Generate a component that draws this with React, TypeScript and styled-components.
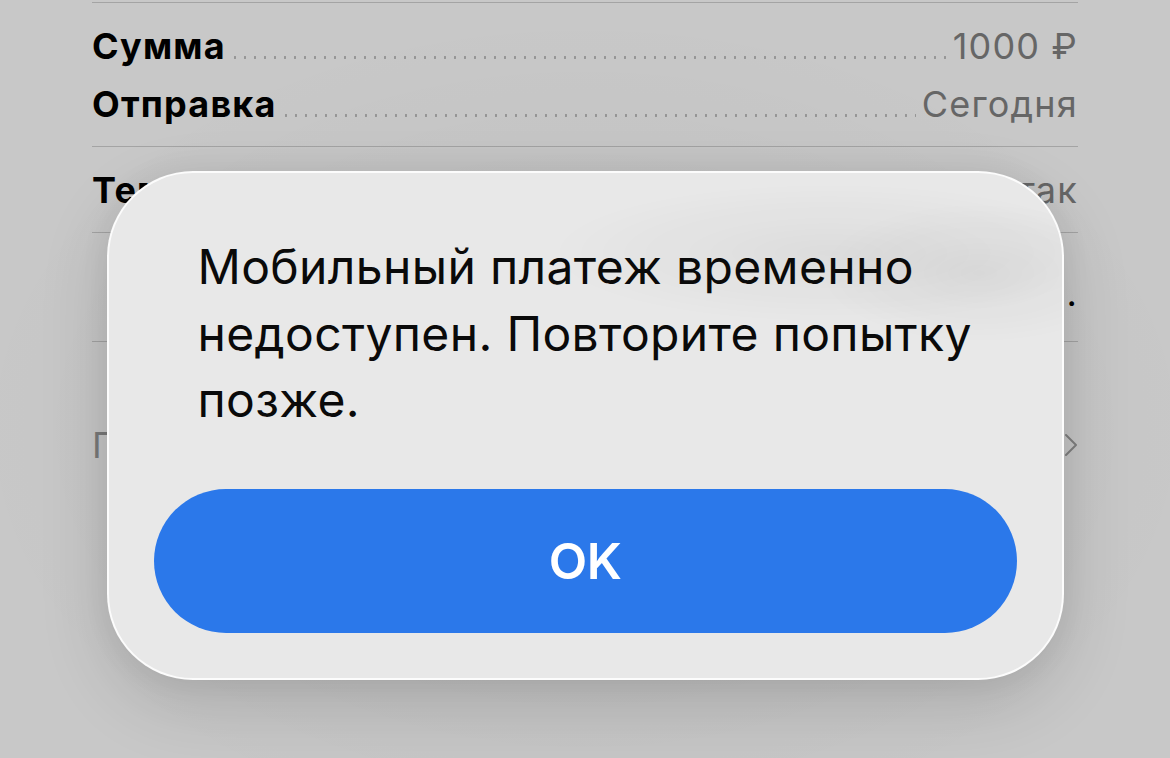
import React from "react";
import styled, { createGlobalStyle } from "styled-components";

const Global = createGlobalStyle`
  html, body {
    margin: 0;
    padding: 0;
    background: #c8c8c8;
  }
  body {
    font-family: Inter, "Noto Sans", "DejaVu Sans", sans-serif;
    -webkit-font-smoothing: antialiased;
  }
`;

const Page = styled.div`
  position: relative;
  width: 1170px;
  height: 758px;
  overflow: hidden;
  padding: 2px 92px 0;
  box-sizing: border-box;
  background: #c8c8c8;
`;

const Section = styled.div<{ pad?: string }>`
  border-top: 1px solid #a4a4a4;
  padding: ${(p) => p.pad || "0"};
`;

const Row = styled.div<{ h: number; shift?: number }>`
  display: flex;
  align-items: center;
  box-sizing: border-box;
  height: ${(p) => p.h}px;
  padding-top: ${(p) => (p.shift ? p.shift * 2 : 0)}px;
  font-size: 36px;
  letter-spacing: 1.2px;
`;

const LeaderRow = styled(Row)`
  align-items: baseline;
  line-height: ${(p) => p.h}px;
`;

const Label = styled.span`
  font-weight: 700;
  color: #000;
  white-space: nowrap;
`;

const Leader = styled.span`
  flex: 1;
  height: 3px;
  margin: 0 6px 0 4px;
  background-image: radial-gradient(circle, #969696 1.1px, transparent 1.5px);
  background-size: 10px 3px;
  background-repeat: repeat-x;
`;

const Value = styled.span`
  color: #666;
  font-weight: 400;
  white-space: nowrap;
  margin-left: auto;
`;

const Period = styled.span`
  color: #000;
  padding-left: 8px;
`;

const Link = styled.span`
  color: #7a7a7a;
  font-weight: 400;
`;

const Chevron = styled.svg`
  margin-left: auto;
  width: 14px;
  height: 24px;
`;

const Overlay = styled.div`
  position: absolute;
  inset: 0;
  display: flex;
  justify-content: center;
  align-items: flex-start;
  padding-top: 171px;
  box-sizing: border-box;
  background: radial-gradient(ellipse 620px 420px at 585px 430px, rgba(0, 0, 0, 0.05), transparent 100%);
`;

const Dialog = styled.div`
  width: 957px;
  height: 509px;
  box-sizing: border-box;
  border-radius: 86px;
  border: 2px solid rgba(255, 255, 255, 0.85);
  background:
    radial-gradient(ellipse 280px 70px at 720px 80px, rgba(0, 0, 0, 0.05), transparent 100%),
    radial-gradient(ellipse 160px 70px at 870px 100px, rgba(0, 0, 0, 0.05), transparent 100%),
    #e8e8e8;
  box-shadow: 0 24px 70px rgba(0, 0, 0, 0.14), 0 0 30px rgba(0, 0, 0, 0.06);
  padding: 61px 45px 45px;
  display: flex;
  flex-direction: column;
`;

const Message = styled.p`
  margin: 0 0 0 44px;
  font-size: 48px;
  line-height: 66.5px;
  font-weight: 400;
  color: #0a0a0a;
  letter-spacing: 0.35px;
`;

const OkButton = styled.button`
  margin-top: auto;
  height: 144px;
  width: 100%;
  border: none;
  border-radius: 72px;
  background: #2b78ea;
  color: #fff;
  font-family: inherit;
  font-size: 50px;
  font-weight: 600;
  letter-spacing: -0.5px;
`;

export default function App() {
  return (
    <>
      <Global />
      <Page>
        <Section pad="14px 0 13px">
          <LeaderRow h={58}>
            <Label>Сумма</Label>
            <Leader />
            <Value>1000 ₽</Value>
          </LeaderRow>
          <LeaderRow h={58}>
            <Label>Отправка</Label>
            <Leader />
            <Value>Сегодня</Value>
          </LeaderRow>
        </Section>
        <Section>
          <Row h={85}>
            <Label>Тема</Label>
            <Value>Просто так</Value>
          </Row>
        </Section>
        <Section>
          <Row h={108} shift={6}>
            <Value>
              Спасибо
              <Period>.</Period>
            </Value>
          </Row>
        </Section>
        <Section>
          <Row h={206}>
            <Link>Подробнее</Link>
            <Chevron viewBox="0 0 14 24">
              <path d="M2 2 L12 12 L2 22" fill="none" stroke="#808080" strokeWidth="2" strokeLinecap="round" strokeLinejoin="round" />
            </Chevron>
          </Row>
        </Section>
        <Overlay>
          <Dialog>
            <Message>
              Мобильный платеж временно
              <br />
              недоступен. Повторите попытку
              <br />
              позже.
            </Message>
            <OkButton>OK</OkButton>
          </Dialog>
        </Overlay>
      </Page>
    </>
  );
}
